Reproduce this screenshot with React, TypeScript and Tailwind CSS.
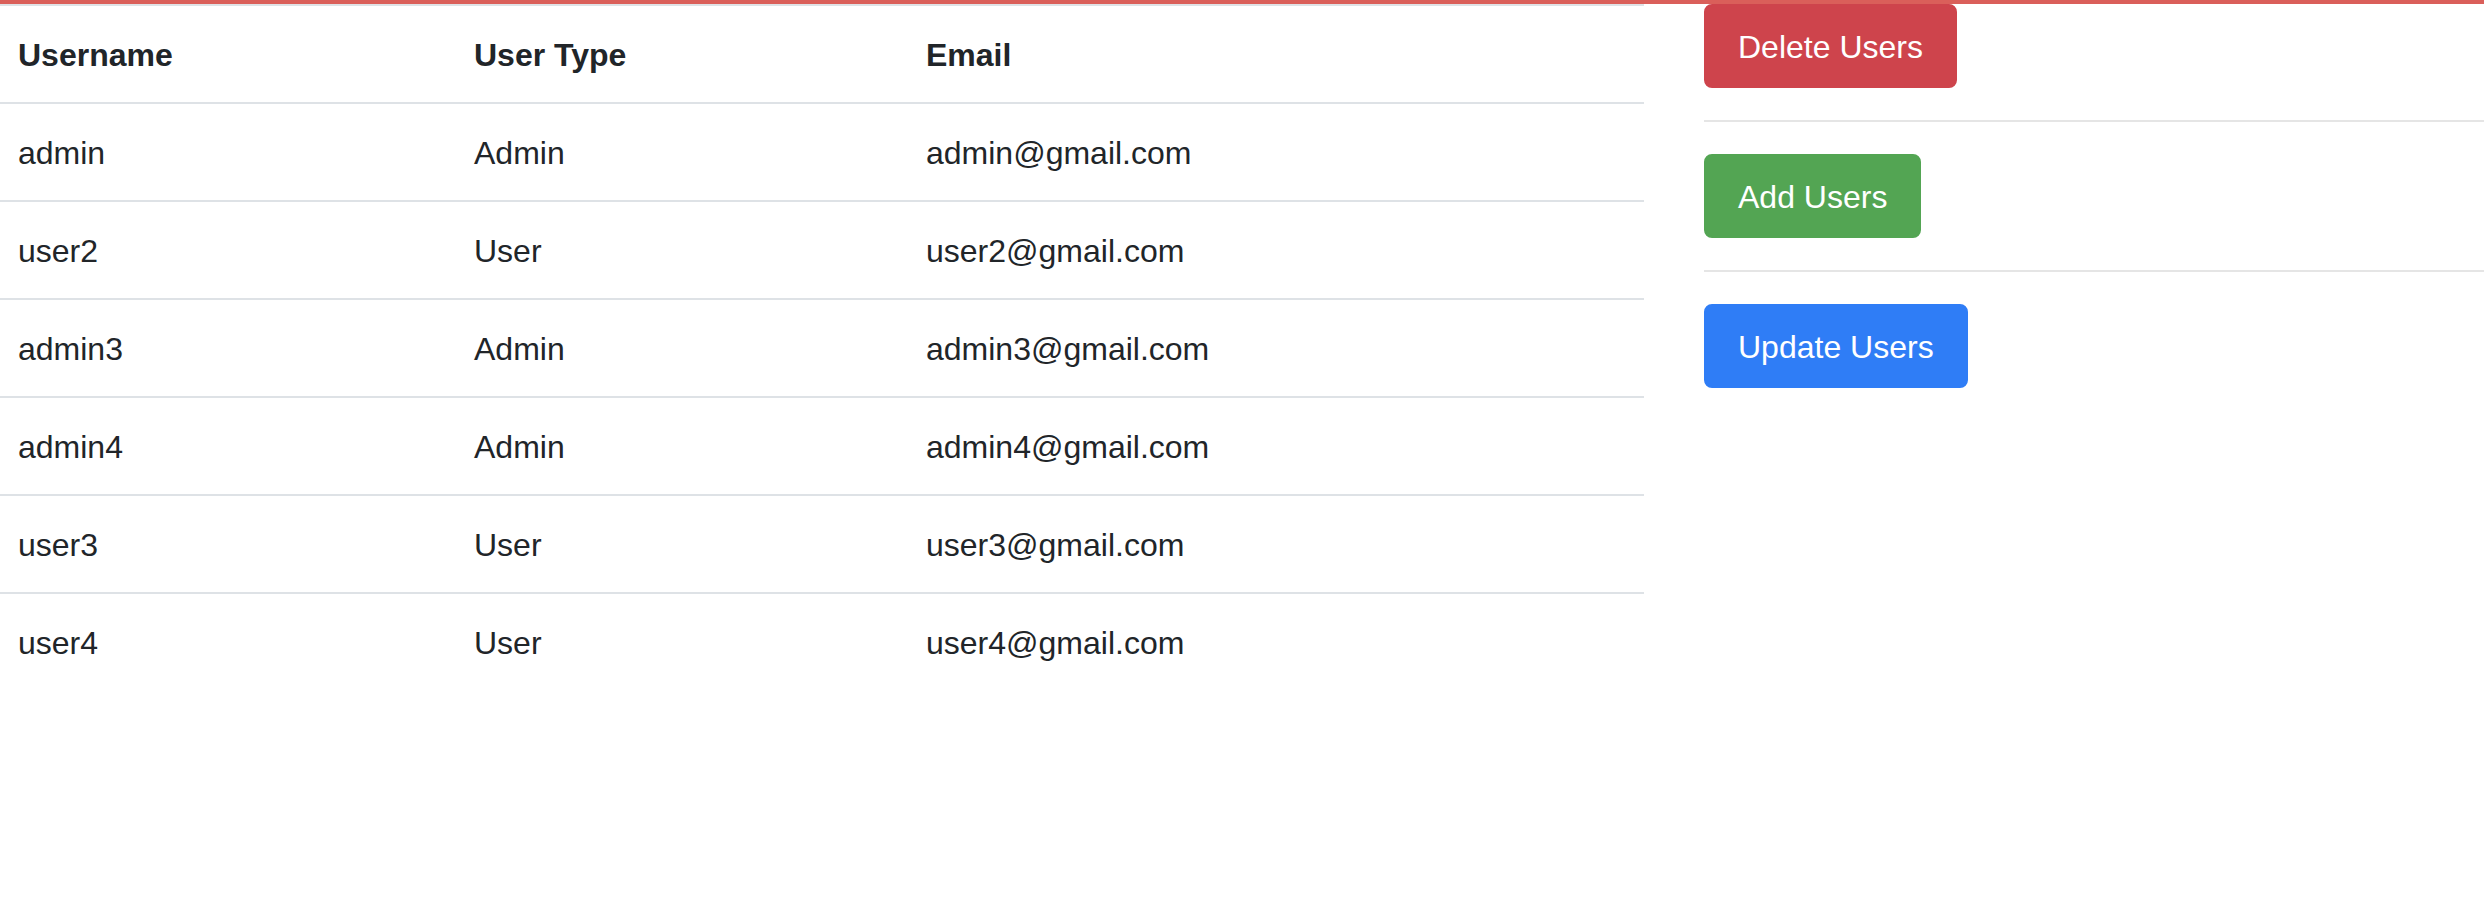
import React from 'react'

type UserRow = {
  username: string
  userType: string
  email: string
}

const USERS: UserRow[] = [
  { username: 'admin', userType: 'Admin', email: 'admin@gmail.com' },
  { username: 'user2', userType: 'User', email: 'user2@gmail.com' },
  { username: 'admin3', userType: 'Admin', email: 'admin3@gmail.com' },
  { username: 'admin4', userType: 'Admin', email: 'admin4@gmail.com' },
  { username: 'user3', userType: 'User', email: 'user3@gmail.com' },
  { username: 'user4', userType: 'User', email: 'user4@gmail.com' }
]

const btn =
  'inline-block rounded-[8px] border-2 px-[32px] pt-[17px] pb-[15px] text-[32px] leading-[48px] font-normal text-white'

export default function App() {
  return (
    <div className="min-h-[900px] bg-white font-['Liberation_Sans',Arial,sans-serif] text-[#212529]">
      <div className="h-[4px] w-full bg-[#da5f5a]" />

      <div className="flex gap-[60px]">
        <div className="w-[1644px] shrink-0">
          <table className="w-full border-collapse text-left text-[32px] leading-[48px]">
            <thead>
              <tr>
                <th className="w-[456px] border-t-2 border-b-2 border-[#dee2e6] pt-[25px] pb-[23px] pl-[18px] font-bold">
                  Username
                </th>
                <th className="w-[452px] border-t-2 border-b-2 border-[#dee2e6] pt-[25px] pb-[23px] pl-[18px] font-bold">
                  User Type
                </th>
                <th className="border-t-2 border-b-2 border-[#dee2e6] pt-[25px] pb-[23px] pl-[18px] font-bold">
                  Email
                </th>
              </tr>
            </thead>
            <tbody>
              {USERS.map((u) => (
                <tr key={u.username}>
                  <td className="border-t-2 border-[#dee2e6] pt-[25px] pb-[23px] pl-[18px]">{u.username}</td>
                  <td className="border-t-2 border-[#dee2e6] pt-[25px] pb-[23px] pl-[18px]">{u.userType}</td>
                  <td className="border-t-2 border-[#dee2e6] pt-[25px] pb-[23px] pl-[18px]">{u.email}</td>
                </tr>
              ))}
            </tbody>
          </table>
        </div>

        <div className="flex-1">
          <button type="button" className={`${btn} border-[#ce444c] bg-[#ce444c]`}>
            Delete Users
          </button>
          <hr className="my-[32px] border-t-2 border-[#e5e5e5]" />
          <button type="button" className={`${btn} border-[#53a553] bg-[#53a553]`}>
            Add Users
          </button>
          <hr className="my-[32px] border-t-2 border-[#e5e5e5]" />
          <button type="button" className={`${btn} border-[#2f7df6] bg-[#2f7df6]`}>
            Update Users
          </button>
        </div>
      </div>
    </div>
  )
}
